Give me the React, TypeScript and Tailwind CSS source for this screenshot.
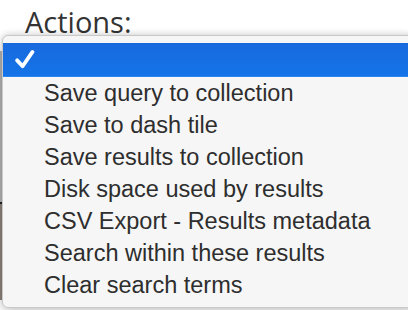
const actions = [
  "Save query to collection",
  "Save to dash tile",
  "Save results to collection",
  "Disk space used by results",
  "CSV Export - Results metadata",
  "Search within these results",
  "Clear search terms",
];

function CheckMark() {
  return (
    <svg width="21" height="21" viewBox="0 0 20 20" className="absolute left-[11px] top-[6px]">
      <path
        d="M3 10.8 L8.2 16.4 L17.6 2.8"
        fill="none"
        stroke="#ffffff"
        strokeWidth="3.6"
        strokeLinecap="round"
        strokeLinejoin="round"
      />
    </svg>
  );
}

export default function App() {
  return (
    <div className="relative h-[310px] w-[408px] overflow-hidden bg-white">
      <h1 className="pl-[25px] pt-[8px] font-['Open_Sans',sans-serif] text-[29px] leading-[28px] text-[#333]">
        Actions:
      </h1>

      {/* page content peeking out behind the menu */}
      <div className="mt-[15px] flex w-[2px] flex-col">
        <div className="h-[151px] bg-[#b4b4b4]" />
        <div className="h-[2px] bg-[#222]" />
        <div className="h-[96px] bg-[#8d847c]" />
      </div>

      <div className="absolute left-[2px] top-[35px] h-[273px] w-[414px] rounded-[6px] border border-[#c9c9c9] bg-[#f6f6f6] pt-[7px] shadow-[0_-1px_6px_rgba(0,0,0,0.12),0_4px_12px_rgba(0,0,0,0.18)]">
        <div className="relative h-[34px] bg-gradient-to-b from-[#176ade] to-[#1474e8] shadow-[inset_0_-1px_0_#2a84f2]">
          <CheckMark />
        </div>
        <ul className="font-['Liberation_Sans',Arial,sans-serif] text-[23.5px] text-[#2e2e2e]">
          {actions.map((label) => (
            <li key={label} className="flex h-[32px] items-center pl-[41px] pt-[1px] leading-none">
              {label}
            </li>
          ))}
        </ul>
      </div>
    </div>
  );
}
